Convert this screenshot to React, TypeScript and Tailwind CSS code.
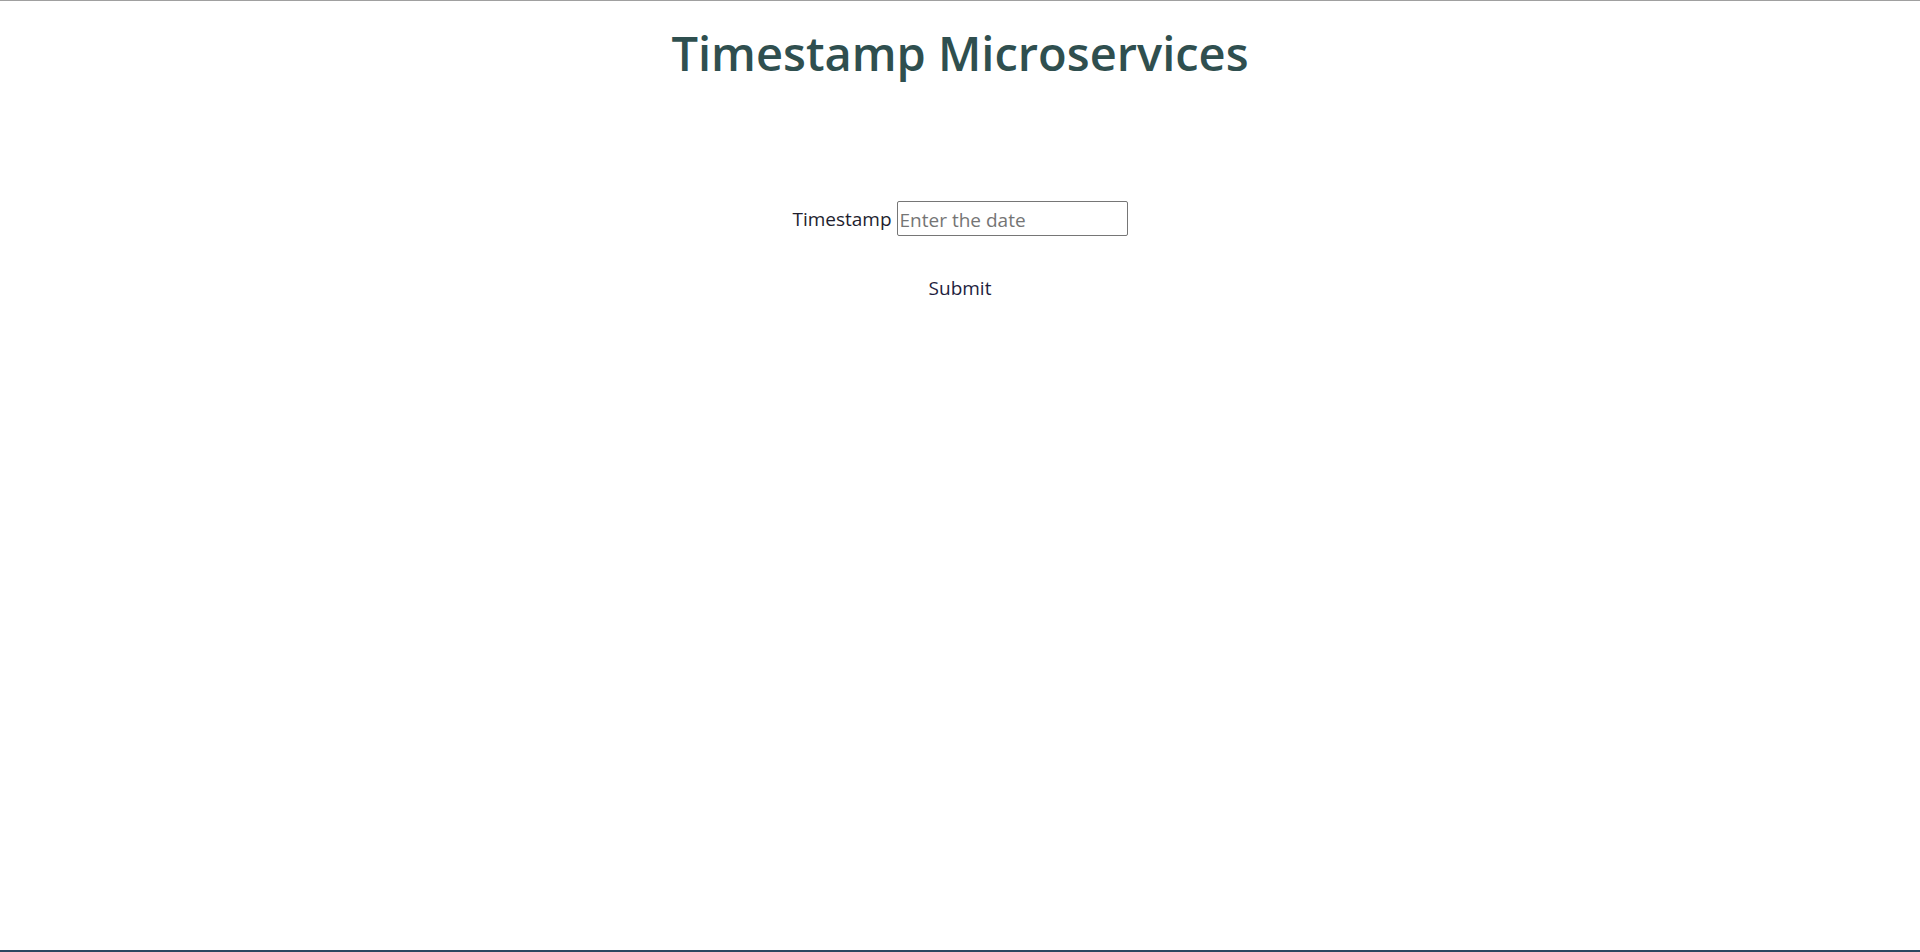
import { useState } from "react";

export default function App() {
	const [date, setDate] = useState("");

	return (
		<div className="h-[952px] flex flex-col bg-white border-t border-t-[#a0a0a0] border-b-2 border-b-[#2d4660] font-['Open_Sans',sans-serif]">
			<h1 className="text-center text-[47px] leading-[64px] font-semibold text-[#2f4f4f] mt-[20px]">
				Timestamp Microservices
			</h1>

			<form
				className="flex flex-col items-center mt-[116px]"
				onSubmit={(e) => e.preventDefault()}
			>
				<div className="flex items-center gap-[5px]">
					<label htmlFor="date" className="text-[19px] text-[#1e1e2e] pt-[2px]">
						Timestamp
					</label>
					<input
						id="date"
						type="text"
						value={date}
						onChange={(e) => setDate(e.target.value)}
						placeholder="Enter the date"
						className="w-[231px] h-[35px] px-[2px] pt-[2px] text-[19px] text-[#1e1e2e] border border-[#767676] rounded-[2px] placeholder:text-[#757575] outline-none"
					/>
				</div>

				<button
					type="submit"
					className="mt-[38px] text-[19px] text-[#1e1e3e] bg-transparent"
				>
					Submit
				</button>
			</form>
		</div>
	);
}
